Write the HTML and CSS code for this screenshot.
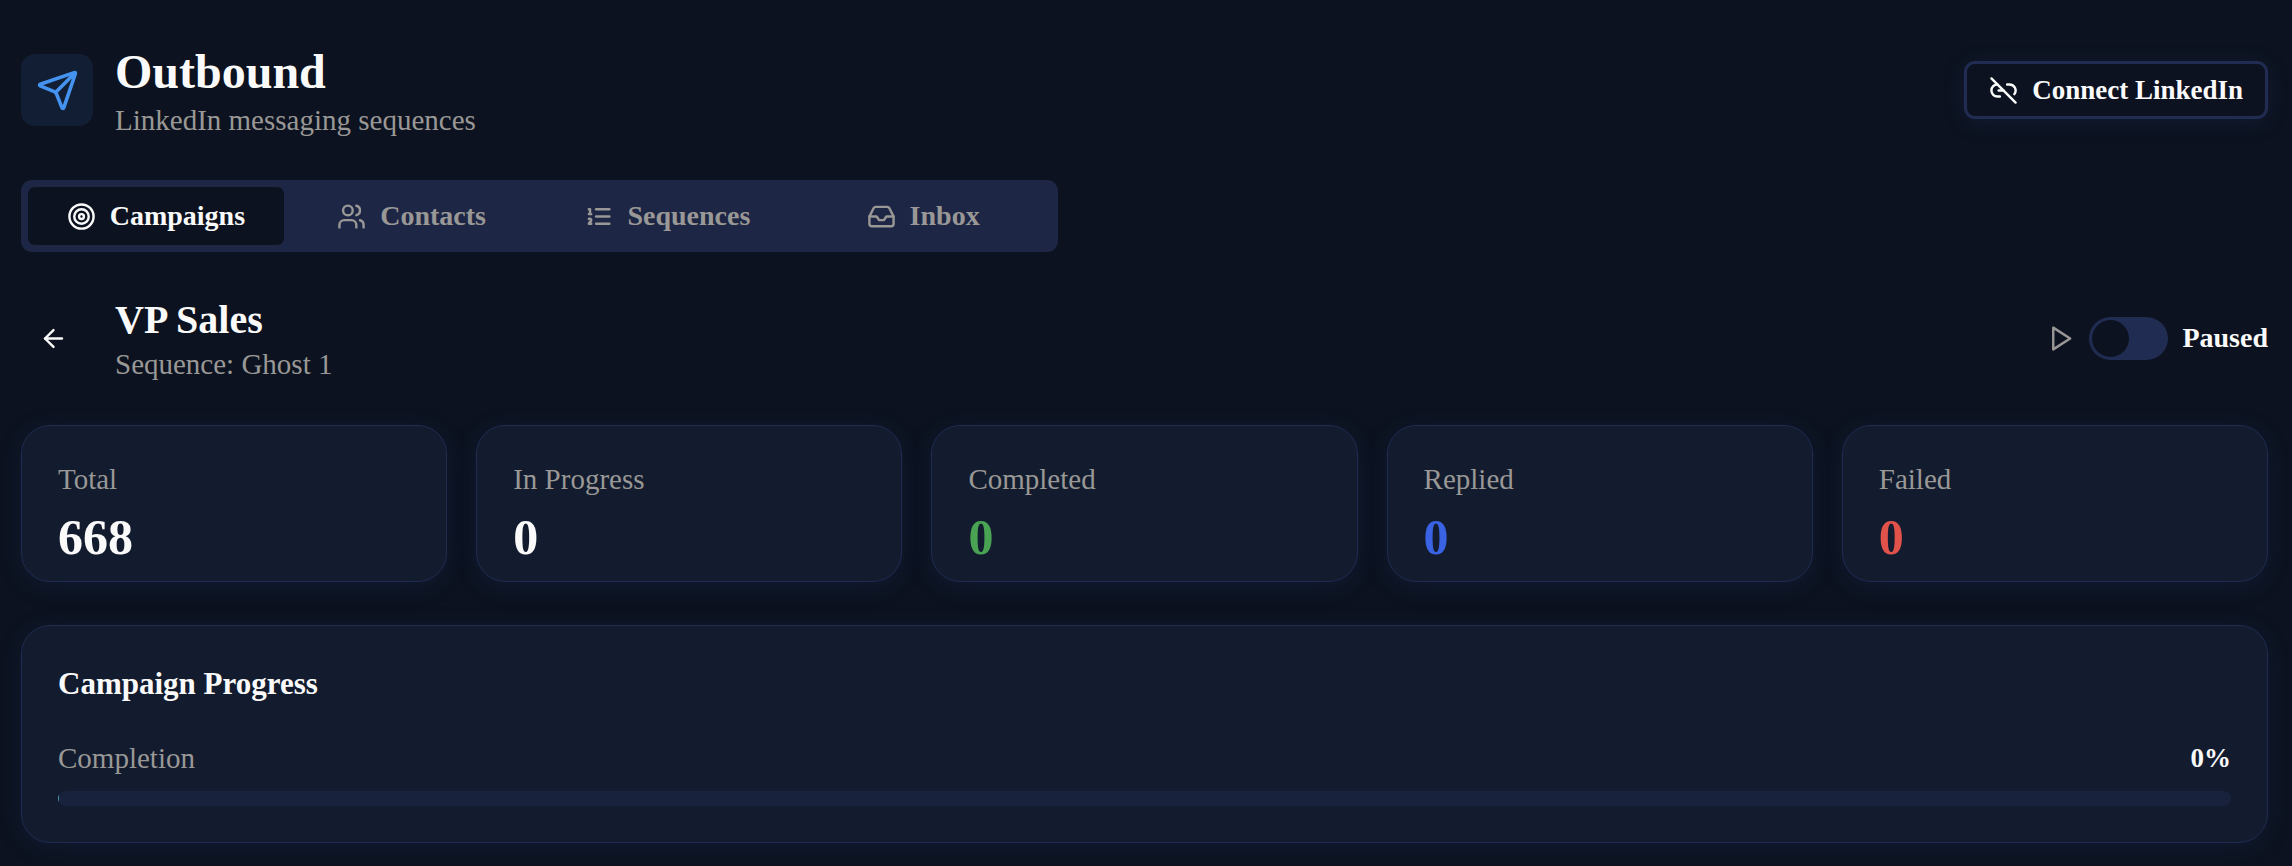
FILE: index.html
```
<!DOCTYPE html>
<html lang="en">
<head>
    <meta charset="UTF-8">
    <meta name="viewport" content="width=device-width, initial-scale=1.0">
    <title>Outbound</title>
    <link rel="stylesheet" href="styles.css">
</head>
<body>
    <main class="page">
        <header class="page-header">
            <div class="brand">
                <div class="brand-icon">
                    <svg class="icon icon-lg" viewBox="0 0 24 24"><path d="M14.536 21.686a.5.5 0 0 0 .937-.024l6.5-19a.496.496 0 0 0-.635-.635l-19 6.5a.5.5 0 0 0-.024.937l7.93 3.18a2 2 0 0 1 1.112 1.11z"/><path d="m21.854 2.147-10.94 10.939"/></svg>
                </div>
                <div>
                    <h1 class="title">Outbound</h1>
                    <p class="subtitle">LinkedIn messaging sequences</p>
                </div>
            </div>
            <button type="button" class="connect-button">
                <svg class="icon" viewBox="0 0 24 24"><path d="M9 17H7A5 5 0 0 1 7 7"/><path d="M15 7h2a5 5 0 0 1 4 8"/><path d="M8 12h4"/><path d="m2 2 20 20"/></svg>
                Connect LinkedIn
            </button>
        </header>

        <nav class="tabs" role="tablist">
            <button type="button" class="tab active" role="tab" aria-selected="true">
                <svg class="icon" viewBox="0 0 24 24"><circle cx="12" cy="12" r="10"/><circle cx="12" cy="12" r="6"/><circle cx="12" cy="12" r="2"/></svg>
                Campaigns
            </button>
            <button type="button" class="tab" role="tab" aria-selected="false">
                <svg class="icon" viewBox="0 0 24 24"><path d="M16 21v-2a4 4 0 0 0-4-4H6a4 4 0 0 0-4 4v2"/><circle cx="9" cy="7" r="4"/><path d="M22 21v-2a4 4 0 0 0-3-3.87"/><path d="M16 3.13a4 4 0 0 1 0 7.75"/></svg>
                Contacts
            </button>
            <button type="button" class="tab" role="tab" aria-selected="false">
                <svg class="icon" viewBox="0 0 24 24"><path d="M10 12h11"/><path d="M10 18h11"/><path d="M10 6h11"/><path d="M4 10h2"/><path d="M4 6h1v4"/><path d="M6 18H4c0-1 2-2 2-3s-1-1.5-2-1"/></svg>
                Sequences
            </button>
            <button type="button" class="tab" role="tab" aria-selected="false">
                <svg class="icon" viewBox="0 0 24 24"><path d="M22 12h-6l-2 3h-4l-2-3H2"/><path d="M5.45 5.11 2 12v6a2 2 0 0 0 2 2h16a2 2 0 0 0 2-2v-6l-3.45-6.89A2 2 0 0 0 16.76 4H7.24a2 2 0 0 0-1.79 1.11z"/></svg>
                Inbox
            </button>
        </nav>

        <section class="campaign-header">
            <div class="campaign-name">
                <button type="button" class="back-button" aria-label="Back">
                    <svg class="icon" viewBox="0 0 24 24"><path d="m12 19-7-7 7-7"/><path d="M19 12H5"/></svg>
                </button>
                <div>
                    <h2 class="campaign-title">VP Sales</h2>
                    <p class="subtitle">Sequence: Ghost 1</p>
                </div>
            </div>
            <div class="status">
                <svg class="icon play-icon" viewBox="0 0 24 24"><polygon points="6 3 20 12 6 21 6 3"/></svg>
                <input type="checkbox" id="statusSwitch" class="switch" role="switch">
                <label for="statusSwitch">Paused</label>
            </div>
        </section>

        <section class="stats">
            <div class="card">
                <p class="stat-label">Total</p>
                <p class="stat-value">668</p>
            </div>
            <div class="card">
                <p class="stat-label">In Progress</p>
                <p class="stat-value">0</p>
            </div>
            <div class="card">
                <p class="stat-label">Completed</p>
                <p class="stat-value green">0</p>
            </div>
            <div class="card">
                <p class="stat-label">Replied</p>
                <p class="stat-value blue">0</p>
            </div>
            <div class="card">
                <p class="stat-label">Failed</p>
                <p class="stat-value red">0</p>
            </div>
        </section>

        <section class="card progress-card">
            <h3 class="card-title">Campaign Progress</h3>
            <div class="progress-row">
                <span class="stat-label">Completion</span>
                <span class="percent">0%</span>
            </div>
            <div class="progress-bar" role="progressbar" aria-label="Completion" aria-valuenow="0" aria-valuemin="0" aria-valuemax="100">
                <div class="progress-fill"></div>
            </div>
        </section>
    </main>
</body>
</html>
```
FILE: styles.css
```
* {
    box-sizing: border-box;
}

body {
    margin: 0;
    background-color: #0c121f;
    color: #fafafa;
    font-family: "Liberation Serif", "Times New Roman", serif;
    font-size: 28px;
    line-height: 40px;
}

h1, h2, h3, p {
    margin: 0;
}

button {
    font: inherit;
    color: inherit;
    cursor: pointer;
}

.page {
    padding: 42px 24px 20px 21px;
}

.icon {
    width: 29px;
    height: 29px;
    flex-shrink: 0;
    fill: none;
    stroke: currentColor;
    stroke-width: 2;
    stroke-linecap: round;
    stroke-linejoin: round;
}

.icon-lg {
    width: 43px;
    height: 43px;
}

.page-header,
.campaign-header,
.progress-row {
    display: flex;
    align-items: center;
    justify-content: space-between;
}

.brand {
    display: flex;
    align-items: center;
    gap: 22px;
}

.brand-icon {
    display: flex;
    align-items: center;
    justify-content: center;
    width: 72px;
    height: 72px;
    border-radius: 14px;
    background-color: #121e33;
    color: #4593f0;
}

.title {
    font-size: 48px;
    line-height: 60px;
}

.subtitle {
    color: #999896;
    font-size: 29px;
    line-height: 36px;
}

.connect-button {
    display: flex;
    align-items: center;
    gap: 14px;
    height: 58px;
    padding: 0 22px;
    border: 3px solid #202c52;
    border-radius: 11px;
    background-color: #0c121f;
    font-size: 27px;
    font-weight: bold;
    box-shadow: 0 3px 20px rgba(32, 52, 100, 0.3);
}

.tabs {
    display: grid;
    grid-template-columns: repeat(4, 1fr);
    max-width: 1037px;
    margin-top: 42px;
    padding: 7px;
    border-radius: 11px;
    background-color: #1e2645;
}

.tab {
    display: flex;
    align-items: center;
    justify-content: center;
    gap: 14px;
    height: 58px;
    padding: 0;
    border: 0;
    border-radius: 7px;
    background: none;
    color: #999896;
    font-weight: bold;
}

.tab.active {
    background-color: #0c121f;
    color: #fafafa;
}

.campaign-header {
    margin-top: 42px;
}

.campaign-name {
    display: flex;
    align-items: center;
    gap: 29px;
}

.back-button {
    display: flex;
    align-items: center;
    justify-content: center;
    width: 65px;
    height: 58px;
    padding: 0;
    border: 0;
    background: none;
}

.campaign-title {
    font-size: 40px;
    line-height: 52px;
}

.status {
    display: flex;
    align-items: center;
    gap: 14px;
    font-weight: bold;
}

.play-icon {
    color: #999896;
}

.switch {
    appearance: none;
    width: 79px;
    height: 43px;
    margin: 0;
    padding: 3px;
    border-radius: 22px;
    background-color: #202c52;
    cursor: pointer;
}

.switch::before {
    content: "";
    display: block;
    width: 37px;
    height: 37px;
    border-radius: 50%;
    background-color: #0c121f;
}

.switch:checked::before {
    margin-left: auto;
}

.stats {
    display: grid;
    grid-template-columns: repeat(5, 1fr);
    gap: 29px;
    margin-top: 43px;
}

.card {
    padding: 33px 36px 11px;
    border: 1px solid #1f2b50;
    border-radius: 29px;
    background-color: #131c2e;
    box-shadow: 0 4px 22px rgba(28, 50, 96, 0.3);
}

.stat-label {
    color: #999896;
    font-size: 29px;
    line-height: 40px;
}

.stat-value {
    margin-top: 6px;
    font-size: 50px;
    font-weight: bold;
    line-height: 65px;
}

.green {
    color: #49a353;
}

.blue {
    color: #3a63e3;
}

.red {
    color: #e0524a;
}

.progress-card {
    margin-top: 43px;
    padding: 36px;
}

.card-title {
    font-size: 31px;
    line-height: 44px;
}

.progress-row {
    margin-top: 32px;
}

.percent {
    font-size: 27px;
    font-weight: bold;
}

.progress-bar {
    height: 15px;
    margin-top: 13px;
    border-radius: 8px;
    background-color: #19223d;
    overflow: hidden;
}

.progress-fill {
    width: 1px;
    height: 100%;
    background-color: #4d9fb8;
}
```
